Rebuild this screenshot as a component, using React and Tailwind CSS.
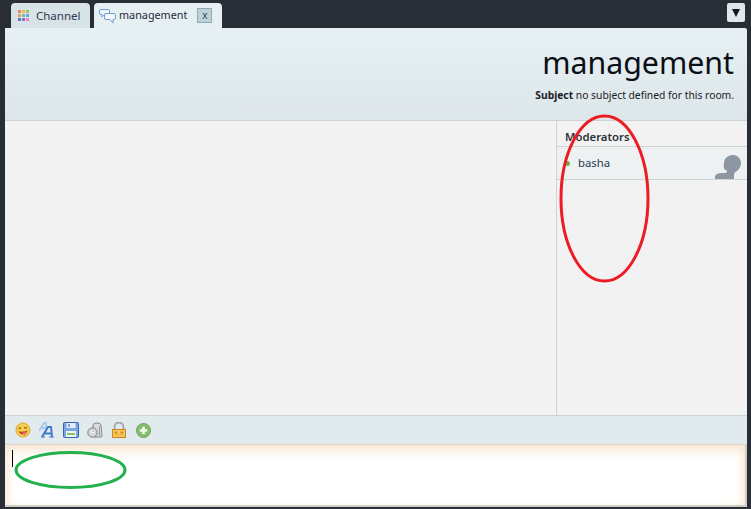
import { useState } from "react";

const font = "font-['Noto_Sans','Open_Sans',sans-serif]";

function GridIcon() {
    const colors = ["#f0826a", "#f2b84e", "#8cc65c", "#e8a05a", "#6cc4a0", "#68a8e0", "#5f78c0", "#8a70c8", "#f080c0"];
    return (
        <div className="grid grid-cols-3 gap-[1px] w-[11px] h-[11px]">
            {colors.map((c, i) => (
                <div key={i} className="w-[3px] h-[3px]" style={{ backgroundColor: c }} />
            ))}
        </div>
    );
}

function ChatIcon() {
    return (
        <svg width="17" height="16" viewBox="0 0 17 16" fill="none" stroke="#6f9fd0" strokeWidth="1">
            <path d="M2 1.500h7a1.500 1.500 0 0 1 1.500 1.500v2a1.500 1.500 0 0 1-1.500 1.500H5L3 9V6.500H2A1.500 1.500 0 0 1 .5 5V3A1.500 1.500 0 0 1 2 1.500z" fill="#f4f8fb" />
            <path d="M7 5.500h8a1.500 1.500 0 0 1 1.500 1.500v3a1.500 1.500 0 0 1-1.500 1.500h-1V15l-3-3.500H7A1.500 1.500 0 0 1 5.500 10V7A1.500 1.500 0 0 1 7 5.500z" fill="#f4f8fb" />
        </svg>
    );
}

function Avatar() {
    return (
        <svg width="28" height="28" viewBox="0 0 28 28" fill="#8d97a1">
            <path d="M0 28v-3c1-2 3-3 7-3 2 0 4 0 5-1 0-1 0-2-1-2-2 0-2-2-2-3-1-1 0-2 0-3 0-2 0-4 2-6 2-2 4-3 7-3 4 0 8 3 8 8 0 4-2 6-4 8-2 1-3 2-3 4v4z" />
        </svg>
    );
}

function Toolbar() {
    return (
        <div className="h-[29px] shrink-0 flex items-center gap-[8px] pl-[10px] bg-[#e1eaed] border-t border-[#cfd3d4]">
            {/* smile */}
            <svg width="16" height="16" viewBox="0 0 16 16">
                <circle cx="8" cy="8" r="7" fill="#f6cf52" stroke="#e3a32e" />
                <path d="M3.500 6.200h2.500M9 5.800h3" stroke="#8a5a12" strokeWidth="1.200" />
                <path d="M3.500 9c2 1 5 1 9-.5-.5 2.500-2 4-4.500 4S4 11 3.500 9z" fill="#c8452a" />
                <path d="M8 10.500h3v1.500a1.500 1.500 0 0 1-3 0z" fill="#ef7f78" />
            </svg>
            {/* font */}
            <svg width="16" height="16" viewBox="0 0 16 16" fill="none">
                <path d="M0 9 5 1h2v8M2.500 6H7" stroke="#a9c9ee" strokeWidth="1.800" />
                <path d="M3 15 9 5h3l1 10M6 11.500h6" stroke="#3f7ccc" strokeWidth="2" />
                <path d="M2 15h4M10 15h5" stroke="#3f7ccc" />
            </svg>
            {/* save */}
            <svg width="16" height="16" viewBox="0 0 16 16">
                <rect x="0.500" y="0.500" width="15" height="15" rx="1" fill="#7ba6e2" stroke="#3566b0" />
                <rect x="3.500" y="1" width="9" height="5" fill="#e6edf6" />
                <rect x="5" y="2" width="2" height="3" fill="#7ba6e2" />
                <rect x="3" y="9" width="10" height="6" fill="#f2f6f0" />
                <rect x="4" y="11" width="8" height="2" fill="#86c060" />
            </svg>
            {/* clear */}
            <svg width="16" height="16" viewBox="0 0 16 16">
                <path d="M6 3a4 2 0 0 1 8 0l1 11a1 1 0 0 1-1 1H7z" fill="#d8dadb" stroke="#85888c" />
                <path d="M12.500 4v10" stroke="#9b9ea1" />
                <circle cx="5.500" cy="10.500" r="4.700" fill="#d2d4d5" stroke="#7b7e82" />
                <path d="M3 9.500 7.500 11.500" stroke="#f6f6f6" strokeWidth="1.200" />
            </svg>
            {/* lock */}
            <svg width="16" height="16" viewBox="0 0 16 16" fill="none">
                <path d="M3.500 8V5a4.500 4.500 0 0 1 9 0v3" stroke="#a2a4a6" strokeWidth="1.800" />
                <rect x="1.500" y="7.500" width="13" height="8" fill="#f6cb5c" stroke="#cc8420" />
                <rect x="3.500" y="9.500" width="3" height="2" fill="#d08a20" />
                <rect x="9.500" y="9.500" width="3" height="2" fill="#d08a20" />
                <rect x="3.500" y="12.500" width="9" height="1" fill="#e6a93a" />
            </svg>
            {/* add */}
            <svg width="15" height="15" viewBox="0 0 15 15" className="ml-[1px]">
                <circle cx="7.500" cy="7.500" r="7" fill="#86bd6c" stroke="#739f60" />
                <path d="M7.500 3.800v7.400M3.800 7.500h7.400" stroke="#f4f8f0" strokeWidth="2.600" />
            </svg>
        </div>
    );
}

export default function App() {
    const [tab] = useState("management");

    return (
        <div className={`relative w-[751px] h-[509px] overflow-hidden bg-[#282d36] flex flex-col ${font}`}>
            <div className="h-[28px] shrink-0 flex items-end justify-between pl-[11px] pr-[6px]">
                <div className="flex items-end gap-[4px]">
                    <div className="h-[25px] w-[79px] flex items-center gap-[7px] pl-[7px] bg-[#d8e3e8] rounded-t-[4px] text-[11.500px] text-[#2b3a4d]">
                        <GridIcon />
                        <span>Channel</span>
                    </div>
                    <div className="h-[25px] w-[128px] flex items-center pl-[5px] bg-[#e6eff2] rounded-t-[4px] text-[10.800px] text-[#1f2a3a]">
                        <ChatIcon />
                        <span className="ml-[3px]">{tab}</span>
                        <span className="ml-[10px] w-[15px] h-[15px] flex items-center justify-center bg-[#bcd2d6] border border-[#8fadb2] text-[10px] text-[#33495e]">x</span>
                    </div>
                </div>
                <div className="self-start mt-[3px] w-[18px] h-[19px] flex items-center justify-center bg-[#dfe8ec] rounded-[2px]">
                    <div className="w-0 h-0 border-l-[4px] border-r-[4px] border-t-[8px] border-l-transparent border-r-transparent border-t-[#15191f]" />
                </div>
            </div>

            <div className="flex-1 min-h-0 ml-[5px] mr-[4px] mb-[2px] flex flex-col bg-[#f3f3f3] rounded-tr-[3px] overflow-hidden">
                <div className="h-[93px] shrink-0 flex flex-col items-end pr-[13px] bg-gradient-to-b from-[#e7f0f3] to-[#dde6e8] border-b border-[#cfd3d4]">
                    <h1 className="mt-[13px] text-[30.300px] leading-[44px] text-[#0a0f15]">management</h1>
                    <p className="mt-[3px] text-[10.300px] leading-[14px] text-[#1a2028]">
                        <b>Subject</b> no subject defined for this room.
                    </p>
                </div>

                <div className="flex-1 min-h-0 flex">
                    <div className="flex-1" />
                    <div className="w-[191px] shrink-0 bg-[#f2f2f2] border-l border-[#cfd3d4]">
                        <div className="h-[25px] pt-[8px] pl-[8px] text-[11.300px] leading-[16px] font-semibold text-[#2c3138]">Moderators</div>
                        <div className="h-[34px] relative flex items-center bg-[#eef1f2] border-y border-[#cfd3d4]">
                            <span className="ml-[8px] w-[5px] h-[5px] rounded-full bg-[#6fb050]" />
                            <span className="ml-[8px] text-[11.300px] text-[#2b3a4d]">basha</span>
                            <div className="ml-auto mr-[4px] mt-[3px] h-[28px]"><Avatar /></div>
                        </div>
                    </div>
                </div>

                <Toolbar />

                <div className="h-[63px] shrink-0 relative bg-white border-t border-[#d8d2c8] border-r-2 border-b-2 border-r-[#cfccc6] border-b-[#cfccc6] shadow-[inset_0_8px_12px_-2px_#f8e8d4,inset_6px_0_10px_-4px_#f8ead8,inset_-6px_0_10px_-4px_#f8ead8]">
                    <div className="absolute left-[7px] top-[5px] w-[1px] h-[17px] bg-black" />
                </div>
            </div>

            {/* hand drawn marks over the screenshot */}
            <svg className="absolute left-0 top-0 pointer-events-none" width="751" height="509" fill="none">
                <ellipse cx="604.500" cy="198.500" rx="43.500" ry="82.500" stroke="#ed1c24" strokeWidth="3" />
                <ellipse cx="70.500" cy="470" rx="54.500" ry="17.500" stroke="#22b14c" strokeWidth="3" />
            </svg>
        </div>
    );
}
